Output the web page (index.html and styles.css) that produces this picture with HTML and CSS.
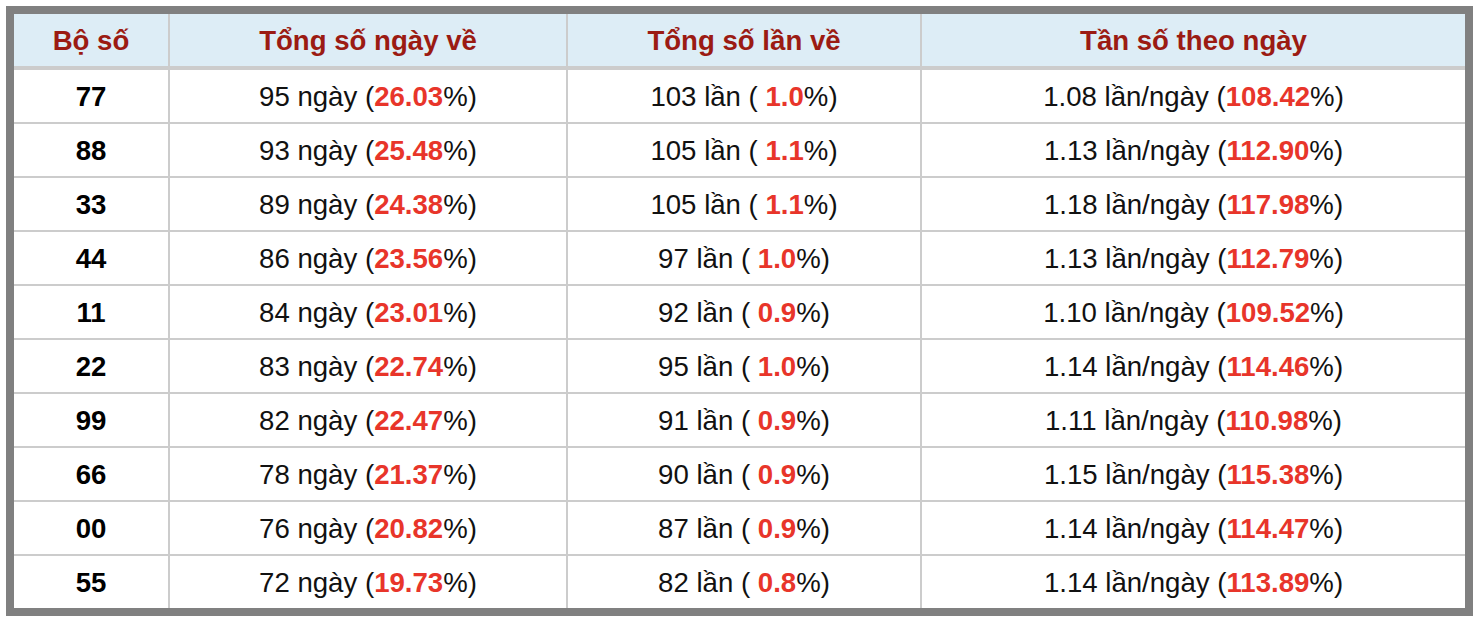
FILE: index.html
```html
<!DOCTYPE html>
<html lang="vi">
<head>
<meta charset="utf-8">
<title>Thống kê bộ số</title>
<link rel="stylesheet" href="styles.css">
</head>
<body>
<table class="stats">
  <colgroup>
    <col class="c1"><col class="c2"><col class="c3"><col class="c4">
  </colgroup>
  <thead>
    <tr><th>Bộ số</th><th>Tổng số ngày về</th><th>Tổng số lần về</th><th>Tần số theo ngày</th></tr>
  </thead>
  <tbody>
    <tr><td class="num">77</td><td>95 ngày (<span class="hl">26.03</span>%)</td><td>103 lần ( <span class="hl">1.0</span>%)</td><td>1.08 lần/ngày (<span class="hl">108.42</span>%)</td></tr>
    <tr><td class="num">88</td><td>93 ngày (<span class="hl">25.48</span>%)</td><td>105 lần ( <span class="hl">1.1</span>%)</td><td>1.13 lần/ngày (<span class="hl">112.90</span>%)</td></tr>
    <tr><td class="num">33</td><td>89 ngày (<span class="hl">24.38</span>%)</td><td>105 lần ( <span class="hl">1.1</span>%)</td><td>1.18 lần/ngày (<span class="hl">117.98</span>%)</td></tr>
    <tr><td class="num">44</td><td>86 ngày (<span class="hl">23.56</span>%)</td><td>97 lần ( <span class="hl">1.0</span>%)</td><td>1.13 lần/ngày (<span class="hl">112.79</span>%)</td></tr>
    <tr><td class="num">11</td><td>84 ngày (<span class="hl">23.01</span>%)</td><td>92 lần ( <span class="hl">0.9</span>%)</td><td>1.10 lần/ngày (<span class="hl">109.52</span>%)</td></tr>
    <tr><td class="num">22</td><td>83 ngày (<span class="hl">22.74</span>%)</td><td>95 lần ( <span class="hl">1.0</span>%)</td><td>1.14 lần/ngày (<span class="hl">114.46</span>%)</td></tr>
    <tr><td class="num">99</td><td>82 ngày (<span class="hl">22.47</span>%)</td><td>91 lần ( <span class="hl">0.9</span>%)</td><td>1.11 lần/ngày (<span class="hl">110.98</span>%)</td></tr>
    <tr><td class="num">66</td><td>78 ngày (<span class="hl">21.37</span>%)</td><td>90 lần ( <span class="hl">0.9</span>%)</td><td>1.15 lần/ngày (<span class="hl">115.38</span>%)</td></tr>
    <tr><td class="num">00</td><td>76 ngày (<span class="hl">20.82</span>%)</td><td>87 lần ( <span class="hl">0.9</span>%)</td><td>1.14 lần/ngày (<span class="hl">114.47</span>%)</td></tr>
    <tr><td class="num">55</td><td>72 ngày (<span class="hl">19.73</span>%)</td><td>82 lần ( <span class="hl">0.8</span>%)</td><td>1.14 lần/ngày (<span class="hl">113.89</span>%)</td></tr>
  </tbody>
</table>
</body>
</html>
```

FILE: styles.css
```css
html, body {
  margin: 0;
  padding: 0;
  background: #ffffff;
}
body {
  padding: 6px;
  font-family: "Liberation Sans", Arial, sans-serif;
}
.stats {
  width: 1467px;
  table-layout: fixed;
  border-collapse: collapse;
  border: 8px solid #808080;
  font-size: 27.6px;
  color: #111111;
}
.c1 { width: 159px; }
.c2 { width: 398px; }
.c3 { width: 354px; }
.c4 { width: 548px; }
.stats th,
.stats td {
  padding: 2px 0 0;
  text-align: center;
  vertical-align: middle;
  border: 2px solid #cccccc;
  white-space: nowrap;
}
.stats th {
  height: 50px;
  background: #ddedf6;
  color: #9b1b13;
  font-weight: bold;
  border-bottom: 4px solid #cccccc;
}
.stats td {
  height: 50px;
}
.stats .num {
  font-weight: bold;
  color: #000000;
}
.hl {
  color: #e8352a;
  font-weight: bold;
}
```
